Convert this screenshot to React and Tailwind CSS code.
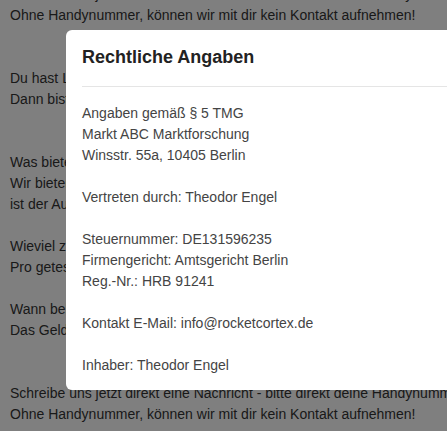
import React from "react";

const bg = [
  "Schreibe uns jetzt direkt eine Nachricht - bitte direkt deine Handynummer angeben.",
  "Ohne Handynummer, können wir mit dir kein Kontakt aufnehmen!",
  "",
  "",
  "Du hast Lust, neue Produkte zu testen und deine Meinung zu sagen?",
  "Dann bist du bei uns genau richtig!",
  "",
  "",
  "Was bieten wir dir?",
  "Wir bieten dir spannende Produkttests. Deine ehrliche Meinung",
  "ist der Ausgangspunkt für unsere Marktforschung.",
  "",
  "Wieviel zahlen wir dir?",
  "Pro getestetem Produkt bekommst du eine Vergütung.",
  "",
  "Wann bekommst du dein Geld?",
  "Das Geld wird direkt nach dem Test überwiesen.",
  "",
  "",
  "Schreibe uns jetzt direkt eine Nachricht - bitte direkt deine Handynummer angeben.",
  "Ohne Handynummer, können wir mit dir kein Kontakt aufnehmen!",
  "",
];

const body = [
  "Angaben gemäß § 5 TMG",
  "Markt ABC Marktforschung",
  "Winsstr. 55a, 10405 Berlin",
  "",
  "Vertreten durch: Theodor Engel",
  "",
  "Steuernummer: DE131596235",
  "Firmengericht: Amtsgericht Berlin",
  "Reg.-Nr.: HRB 91241",
  "",
  "Kontakt E-Mail: info@rocketcortex.de",
  "",
  "Inhaber: Theodor Engel",
];

export default function App() {
  return (
    <div
      className="relative w-[447px] h-[431px] overflow-hidden bg-white"
      style={{ fontFamily: '"Liberation Sans", Arial, sans-serif' }}
    >
      <div className="-mt-[16px] pl-[10px] text-[14px] leading-[21px] text-[#333] whitespace-nowrap">
        {bg.map((l, i) => (
          <div key={i} className="h-[21px]">{l}</div>
        ))}
      </div>
      <div className="absolute inset-0 bg-black/50" />
      <div className="absolute left-[66px] top-[30px] w-[600px] h-[360px] rounded-[6px] bg-white">
        <div className="px-4 pt-[17px] pb-[19px]">
          <h4 className="text-[18px] leading-[20px] font-bold text-[#222]">Rechtliche Angaben</h4>
        </div>
        <div className="mx-4 border-t border-[#e5e5e5]" />
        <div className="px-4 pt-[16px] text-[14px] leading-[21px] text-[#444]">
          {body.map((l, i) => (
            <div key={i} className="h-[21px]">{l}</div>
          ))}
        </div>
      </div>
    </div>
  );
}
